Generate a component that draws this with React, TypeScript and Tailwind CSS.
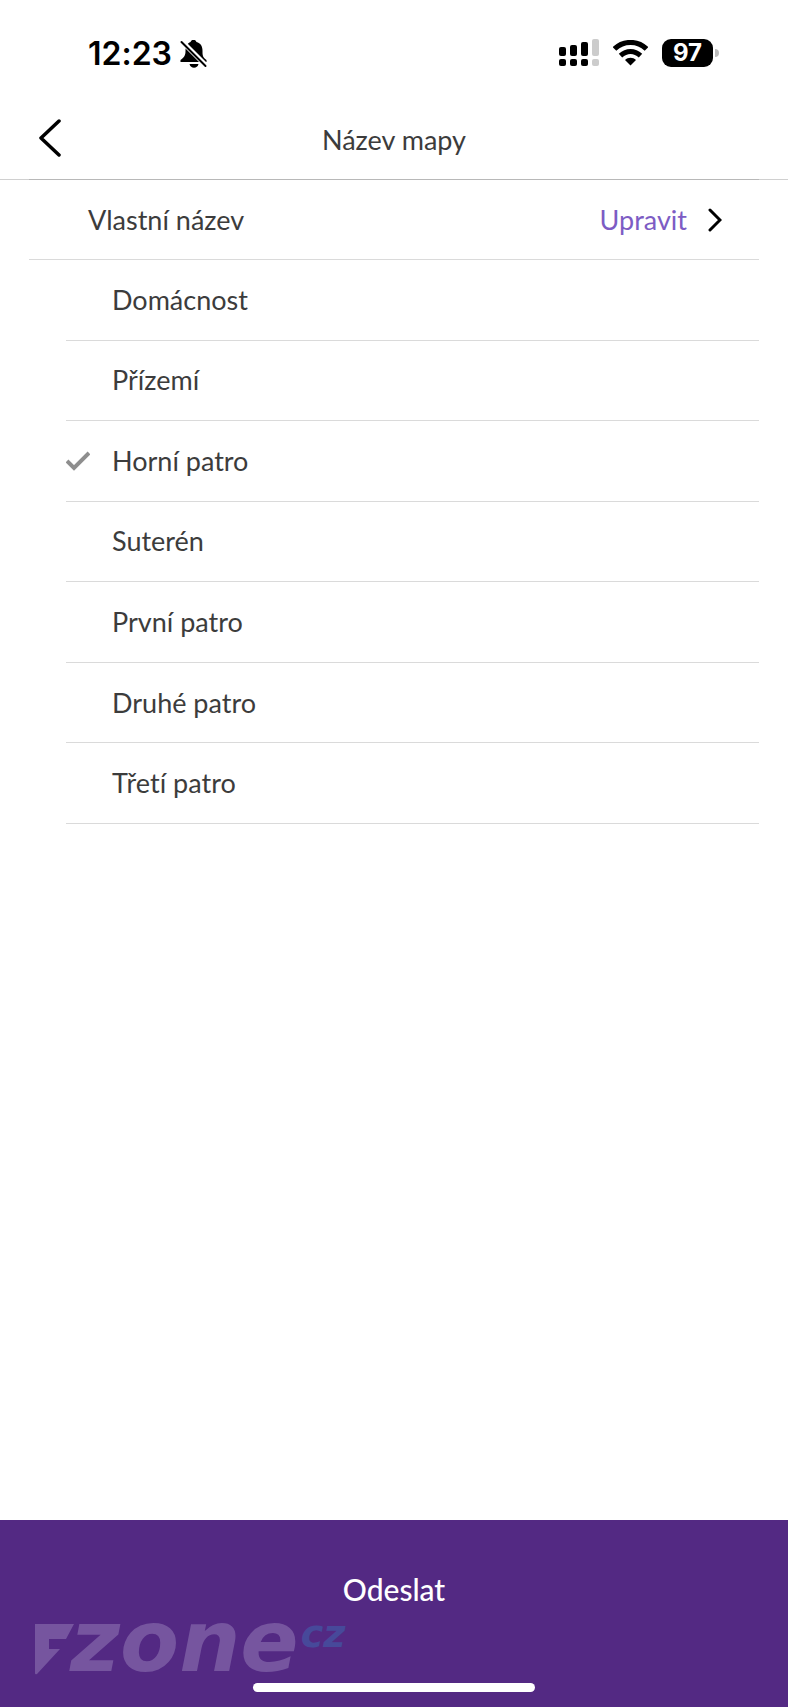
import { useState } from 'react'

const floors = [
  'Domácnost',
  'Přízemí',
  'Horní patro',
  'Suterén',
  'První patro',
  'Druhé patro',
  'Třetí patro',
]

function StatusBar() {
  return (
    <div className="flex h-[106px] items-center justify-between pr-[69px] pl-[88px] font-['Inter',sans-serif] text-black">
      <div className="flex items-center gap-2 pt-0.5">
        <span className="text-[32px] leading-10 font-semibold">12:23</span>
        <svg width="27" height="28" viewBox="0 0 26 28" role="img" aria-label="Silent">
          <path d="M0 22v-2c4-3 5-5 5-9 0-5 2-8 5-9 1-3 5-3 6 0 4 1 6 4 6 9 0 4 0 6 4 9v2z" />
          <path d="M9 24h9c-1 5-8 5-9 0z" />
          <path d="M0 0 26 26" stroke="#fff" strokeWidth="5" />
          <path d="M1 2 25 26" stroke="#000" strokeWidth="2" strokeLinecap="round" />
        </svg>
      </div>
      <div className="flex items-center">
        <svg className="mr-3" width="42" height="28" viewBox="0 0 42 28" role="img" aria-label="Signal">
          <rect x="0" y="8" width="7" height="9" rx="2" />
          <rect x="11" y="6" width="7" height="11" rx="2" />
          <rect x="22" y="3" width="7" height="14" rx="2" />
          <rect x="33" y="0" width="7" height="17" rx="2" fill="#ccc" />
          <rect x="0" y="20" width="7" height="7" rx="2" />
          <rect x="11" y="20" width="7" height="7" rx="2" />
          <rect x="22" y="20" width="7" height="7" rx="2" />
          <rect x="33" y="20" width="7" height="7" rx="2" fill="#ccc" />
        </svg>
        <svg className="mr-3.5" width="35" height="26" viewBox="0 0 35 26" fill="none" stroke="#000" role="img" aria-label="Wi-Fi">
          <path d="M1.500 9C10.500 0.300 24.500 0.300 33.500 9" strokeWidth="5.200" />
          <path d="M7.500 15.600C13.500 10 21.500 10 27.500 15.600" strokeWidth="5" />
          <path d="M12 20C15 17 20 17 23 20L17.500 25.500z" fill="#000" stroke="none" />
        </svg>
        <div className="flex h-7 w-[51px] items-center justify-center rounded-[9px] bg-black text-2xl font-bold text-white">
          97
        </div>
        <div className="ml-0.5 h-2 w-1 rounded-r-full bg-[#bbb]" />
      </div>
    </div>
  )
}

function Watermark() {
  return (
    <div
      aria-label="fzone.cz"
      className="pointer-events-none absolute bottom-[31px] left-[35px] flex items-start font-['DejaVu_Sans',sans-serif] font-bold text-[#76559f] italic"
    >
      <svg className="mt-0.5" width="39" height="52" viewBox="0 0 39 52" fill="currentColor" aria-hidden="true">
        <path d="M0 0h39l-8 15H14v10h11L2 50q-2 1-2-1z" />
      </svg>
      <span className="-mt-3.5 -ml-1 text-[86px] leading-[66px]">zone</span>
      <span className="-mt-1 ml-0.5 text-[38px] leading-8 text-[#47499a]">cz</span>
    </div>
  )
}

export default function App() {
  const [selected, setSelected] = useState('Horní patro')

  return (
    <div className="flex min-h-screen flex-col bg-white font-['Lato',sans-serif] text-[27px] leading-9 text-[#3c3c3c] [font-variant-ligatures:none]">
      <StatusBar />

      <header className="grid h-[74px] grid-cols-[1fr_auto_1fr] items-center border-b border-[#d0d0d0] px-[39px] pb-2.5">
        <button aria-label="Zpět" className="justify-self-start">
          <svg width="22" height="38" viewBox="0 0 22 38" fill="none" stroke="#000" strokeWidth="3.500" strokeLinecap="round" strokeLinejoin="round">
            <path d="M20 2 2 19l18 17" />
          </svg>
        </button>
        <h1 className="pt-1">Název mapy</h1>
      </header>

      <main className="-mt-px mr-[29px] flex-1">
        <button className="ml-[29px] flex h-[81px] w-[calc(100%-29px)] items-center justify-between border-t border-b border-t-[#b8b8b8] border-b-[#dadada] pr-[37px] pl-[59px]">
          <span>Vlastní název</span>
          <span className="flex items-center gap-5 text-[#7d5cc4]">
            Upravit
            <svg width="15" height="24" viewBox="0 0 15 24" fill="none" stroke="#000" strokeWidth="3" strokeLinecap="round">
              <path d="M3 2 13 12 3 22" />
            </svg>
          </span>
        </button>

        <div role="radiogroup" aria-label="Název mapy" className="ml-[66px] grid min-h-[564px] auto-rows-fr">
          {floors.map((floor) => (
            <label key={floor} className="relative flex items-center border-b border-[#dadada]">
              <input
                type="radio"
                name="floor"
                className="peer sr-only"
                checked={selected === floor}
                onChange={() => setSelected(floor)}
              />
              <svg className="invisible mr-[22px] peer-checked:visible" width="24" height="20" viewBox="0 0 24 20" fill="none" stroke="#8e8e8e" strokeWidth="4">
                <path d="M1 10 8 17 23 2" />
              </svg>
              {floor}
            </label>
          ))}
        </div>
      </main>

      <footer className="relative flex h-[187px] flex-col items-center justify-between bg-[#532983] pt-[49px] pb-[15px]">
        <button className="px-10 text-[30px] leading-10 font-medium text-white">Odeslat</button>
        <Watermark />
        <div className="h-[9px] w-[282px] rounded-full bg-white" />
      </footer>
    </div>
  )
}
